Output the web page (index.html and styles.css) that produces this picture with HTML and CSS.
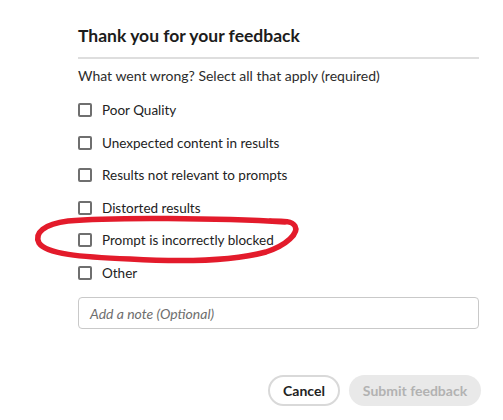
FILE: index.html
```html
<!DOCTYPE html>
<html lang="en">
<head>
<meta charset="utf-8">
<title>Feedback</title>
<link rel="stylesheet" href="styles.css">
</head>
<body>
<div class="panel">
  <h2 class="title">Thank you for your feedback</h2>
  <div class="divider"></div>
  <p class="question">What went wrong? Select all that apply (required)</p>
  <ul class="options">
    <li class="option"><span class="box"></span><span class="label">Poor Quality</span></li>
    <li class="option"><span class="box"></span><span class="label">Unexpected content in results</span></li>
    <li class="option"><span class="box"></span><span class="label">Results not relevant to prompts</span></li>
    <li class="option"><span class="box"></span><span class="label">Distorted results</span></li>
    <li class="option"><span class="box"></span><span class="label">Prompt is incorrectly blocked</span></li>
    <li class="option"><span class="box"></span><span class="label">Other</span></li>
  </ul>
  <div class="note">Add a note (Optional)</div>
  <div class="actions">
    <button class="btn cancel">Cancel</button>
    <button class="btn submit">Submit feedback</button>
  </div>
</div>
<svg class="scribble" width="503" height="420" viewBox="0 0 503 420">
  <path d="M 285 222 C 220 218, 110 217, 68 221 C 44 224, 34 233, 39 243 C 46 254, 80 257, 130 259 C 180 262, 232 261, 266 252 C 287 245, 299 233, 295 226 C 292 221, 285 221, 270 221" fill="none" stroke="#e31b2b" stroke-width="5.5" stroke-linecap="round" stroke-linejoin="round"/>
</svg>
</body>
</html>
```

FILE: styles.css
```css
* { box-sizing: border-box; }
html, body {
  margin: 0;
  padding: 0;
  background: #ffffff;
}
body {
  font-family: Lato, "Liberation Sans", sans-serif;
  color: #222222;
  position: relative;
  width: 503px;
  height: 420px;
  overflow: hidden;
}
.panel {
  margin-left: 78px;
  width: 401px;
  padding-top: 24px;
  display: flex;
  flex-direction: column;
}
.title {
  margin: 0;
  font-size: 17.5px;
  line-height: 24px;
  font-weight: 700;
  color: #1c1c1c;
}
.divider {
  margin-top: 9px;
  height: 2px;
  background: #dedede;
}
.question {
  margin: 7px 0 0 0;
  font-size: 14px;
  line-height: 20px;
  color: #2c2c2c;
}
.options {
  list-style: none;
  margin: 8px 0 0 0;
  padding: 0;
}
.option {
  height: 32.5px;
  display: flex;
  align-items: center;
  gap: 10px;
}
.box {
  width: 14px;
  height: 14px;
  border: 2px solid #6f6f6f;
  border-radius: 2px;
  flex: none;
}
.label {
  font-size: 13.5px;
  color: #222222;
}
.note {
  margin-top: 8px;
  height: 32px;
  border: 1px solid #c9c9c9;
  border-radius: 4px;
  padding-left: 11px;
  display: flex;
  align-items: center;
  font-size: 14px;
  font-style: italic;
  color: #6e6e6e;
}
.actions {
  margin-top: 46px;
  margin-right: -2px;
  display: flex;
  justify-content: flex-end;
  gap: 9px;
}
.btn {
  height: 31px;
  border-radius: 16px;
  font-family: Lato, "Liberation Sans", sans-serif;
  font-size: 14px;
  font-weight: 700;
  padding: 0;
}
.cancel {
  width: 72px;
  background: #ffffff;
  border: 2px solid #d9d9d9;
  color: #222222;
}
.submit {
  width: 132px;
  background: #e9e9e9;
  border: none;
  color: #b2b2b2;
}
.scribble {
  position: absolute;
  left: 0;
  top: 0;
  pointer-events: none;
}
```
